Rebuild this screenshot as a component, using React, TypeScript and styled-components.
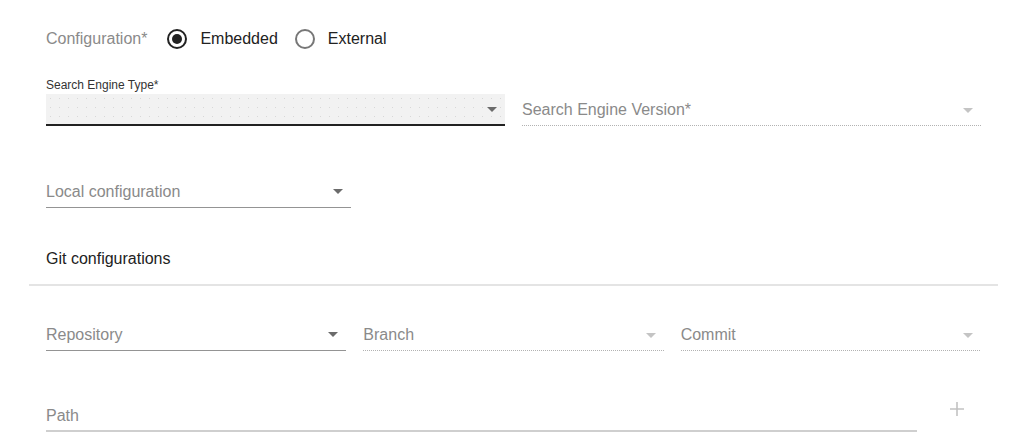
import { FC } from "react";
import styled, { createGlobalStyle } from "styled-components";

const GlobalStyle = createGlobalStyle`
  body {
    margin: 0;
    background: #fff;
    font-family: "Liberation Sans", Arial, sans-serif;
  }
`;

const Page = styled.div`
  width: 969px;
  margin-left: 29px;
  padding-top: 27px;
  display: flex;
  flex-direction: column;
`;

const Section = styled.div<{ $top?: number }>`
  padding: 0 17px;
  margin-top: ${p => p.$top ?? 0}px;
  display: flex;
  align-items: flex-end;
  gap: 17px;
`;

const RadioRow = styled.div`
  height: 24px;
  padding: 0 17px;
  display: flex;
  align-items: center;
  font-size: 16px;
`;

const GroupLabel = styled.span`
  color: #8a8a8a;
  margin-right: 20px;
`;

const Radio = styled.span<{ $checked?: boolean }>`
  width: 20px;
  height: 20px;
  box-sizing: border-box;
  border-radius: 50%;
  border: 2px solid ${p => (p.$checked ? "#222" : "#777")};
  display: flex;
  align-items: center;
  justify-content: center;
  margin-right: 13px;

  &::after {
    content: "";
    display: ${p => (p.$checked ? "block" : "none")};
    width: 10px;
    height: 10px;
    border-radius: 50%;
    background: #222;
  }
`;

const RadioText = styled.span`
  color: #222;
  margin-right: 17px;
`;

const FieldColumn = styled.div<{ $width?: number }>`
  display: flex;
  flex-direction: column;
  ${p => (p.$width ? `width: ${p.$width}px;` : "flex: 1;")}
`;

const SmallLabel = styled.div`
  font-size: 12px;
  line-height: 14px;
  color: #333;
  margin-bottom: 2px;
`;

const Select = styled.div<{ $variant: "filled" | "standard" | "disabled" }>`
  height: 32px;
  box-sizing: border-box;
  display: flex;
  align-items: center;
  font-size: 16px;
  color: #8a8a8a;
  ${p =>
    p.$variant === "filled"
      ? `
    background-color: #f2f2f2;
    background-image: radial-gradient(circle, #d8d8d8 0.7px, transparent 1px);
    background-size: 9px 9px;
    border-bottom: 2px solid #222;
  `
      : p.$variant === "standard"
      ? `border-bottom: 1px solid #949494;`
      : `
    background-image: linear-gradient(to right, rgba(0,0,0,0.3) 50%, transparent 0%);
    background-position: left bottom;
    background-size: 2px 1px;
    background-repeat: repeat-x;
  `}
`;

const SelectText = styled.span`
  flex: 1;
`;

const Arrow = styled.span<{ $disabled?: boolean }>`
  width: 0;
  height: 0;
  border-left: 5px solid transparent;
  border-right: 5px solid transparent;
  border-top: 5px solid ${p => (p.$disabled ? "#c4c4c4" : "#6b6b6b")};
  margin-right: 8px;
`;

const Title = styled.div`
  padding: 0 17px;
  margin-top: 41px;
  font-size: 16px;
  line-height: 20px;
  color: #222;
`;

const Divider = styled.div`
  margin-top: 15px;
  height: 2px;
  background: #e4e4e4;
`;

const PathRow = styled.div`
  margin-top: 49px;
  padding: 0 17px;
  display: flex;
  align-items: flex-start;
`;

const PathInput = styled.div`
  width: 871px;
  height: 32px;
  box-sizing: border-box;
  padding-top: 1px;
  display: flex;
  align-items: center;
  font-size: 16px;
  color: #8a8a8a;
  border-bottom: 2px solid #cfcfcf;
`;

const AddButton = styled.div`
  margin-left: 32px;
  margin-top: 1px;
  width: 16px;
  height: 16px;
  display: flex;
  align-items: center;
  justify-content: center;
`;

type Variant = "filled" | "standard" | "disabled";

const SelectField: FC<{ label?: string; variant: Variant }> = ({ label, variant }) => (
  <Select $variant={variant}>
    <SelectText>{label}</SelectText>
    <Arrow $disabled={variant === "disabled"} />
  </Select>
);

export default function App() {
  return (
    <>
      <GlobalStyle />
      <Page>
        <RadioRow>
          <GroupLabel>Configuration*</GroupLabel>
          <Radio $checked />
          <RadioText>Embedded</RadioText>
          <Radio />
          <RadioText>External</RadioText>
        </RadioRow>

        <Section $top={27}>
          <FieldColumn>
            <SmallLabel>Search Engine Type*</SmallLabel>
            <SelectField variant="filled" />
          </FieldColumn>
          <FieldColumn>
            <SelectField label="Search Engine Version*" variant="disabled" />
          </FieldColumn>
        </Section>

        <Section $top={50}>
          <FieldColumn $width={305}>
            <SelectField label="Local configuration" variant="standard" />
          </FieldColumn>
        </Section>

        <Title>Git configurations</Title>
        <Divider />

        <Section $top={33}>
          <FieldColumn>
            <SelectField label="Repository" variant="standard" />
          </FieldColumn>
          <FieldColumn>
            <SelectField label="Branch" variant="disabled" />
          </FieldColumn>
          <FieldColumn>
            <SelectField label="Commit" variant="disabled" />
          </FieldColumn>
        </Section>

        <PathRow>
          <PathInput>Path</PathInput>
          <AddButton>
            <svg width="16" height="16" viewBox="0 0 16 16">
              <path d="M8 1v14M1 8h14" stroke="#c2c2c2" strokeWidth="1.6" fill="none" />
            </svg>
          </AddButton>
        </PathRow>
      </Page>
    </>
  );
}
